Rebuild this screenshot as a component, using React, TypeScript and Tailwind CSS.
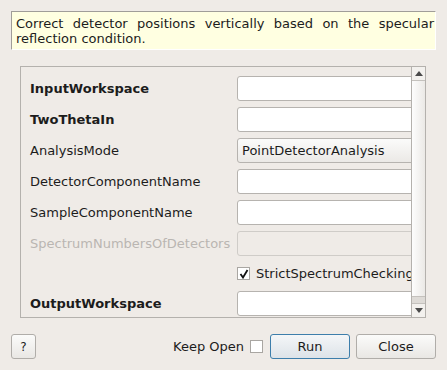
import React from "react";

const rows = [
  { label: "InputWorkspace", bold: true, kind: "input" },
  { label: "TwoThetaIn", bold: true, kind: "input" },
  { label: "AnalysisMode", kind: "combo", value: "PointDetectorAnalysis" },
  { label: "DetectorComponentName", kind: "input" },
  { label: "SampleComponentName", kind: "input" },
  { label: "SpectrumNumbersOfDetectors", kind: "disabled" },
  { label: "", kind: "check", value: "StrictSpectrumChecking" },
  { label: "OutputWorkspace", bold: true, kind: "input" },
];

function Field({ row }: any) {
  if (row.kind === "combo")
    return (
      <div className="w-[200px] h-[25px] shrink-0 rounded-[3px] border border-[#b6b3af] bg-gradient-to-b from-[#fbfbfa] to-[#ebe9e6] pl-[4px] flex items-center">
        {row.value}
      </div>
    );
  if (row.kind === "disabled")
    return <div className="w-[200px] h-[25px] shrink-0 rounded-[3px] border border-[#cfccc8] bg-[#efebe7]" />;
  if (row.kind === "check")
    return (
      <div className="h-[23px] flex items-center gap-[6px] whitespace-nowrap">
        <div className="w-[13px] h-[13px] border border-[#a9a6a2] bg-white flex items-center justify-center">
          <svg width="10" height="10" viewBox="0 0 10 10">
            <path d="M1.5 5 L4 8.5 L8.5 1" fill="none" stroke="#111" strokeWidth="1.8" />
          </svg>
        </div>
        <span>{row.value}</span>
      </div>
    );
  return <div className="w-[200px] h-[25px] shrink-0 rounded-[3px] border border-[#b6b3af] bg-white" />;
}

export default function App() {
  return (
    <div
      className="w-[447px] h-[370px] bg-[#efebe7] text-[13px] text-[#1c1c1c] overflow-hidden flex flex-col"
      style={{ fontFamily: '"DejaVu Sans", sans-serif' }}
    >
      <div className="ml-[11px] mt-[11px] w-[425px] h-[39px] bg-[#ffffe1] border-t border-l border-[#a09d99] border-r border-b border-r-white border-b-white pl-[4px] pr-[1px] pt-[4px] leading-[15px] text-justify">
        Correct detector positions vertically based on the specular reflection condition.
      </div>

      <div className="ml-[20px] mt-[16px] w-[406px] h-[252px] border border-[#b4b1ad] flex">
        <div className="flex-1 overflow-hidden pl-[9px] pt-[9px] flex flex-col gap-[6px]">
          {rows.map((r, i) => (
            <div key={i} className="flex items-center">
              <div
                className={`w-[207px] shrink-0 whitespace-nowrap ${r.bold ? "font-bold" : ""} ${
                  r.kind === "disabled" ? "text-[#bab6b2]" : ""
                }`}
              >
                {r.label}
              </div>
              <Field row={r} />
            </div>
          ))}
        </div>
        <div className="w-[14px] border-l border-[#b4b1ad] flex flex-col">
          <div className="h-[14px] border-b border-[#c4c1bd] flex items-center justify-center bg-[#f3f1ee]">
            <svg width="8" height="5" viewBox="0 0 8 5">
              <path d="M0 5 L4 0 L8 5 Z" fill="#4a4a4a" />
            </svg>
          </div>
          <div className="flex-1 bg-gradient-to-r from-[#fdfdfd] to-[#ebe9e6]" />
          <div className="h-[7px] bg-[#dedbd7] border-t border-[#c4c1bd]" />
          <div className="h-[14px] border-t border-[#c4c1bd] flex items-center justify-center bg-[#f3f1ee]">
            <svg width="8" height="5" viewBox="0 0 8 5">
              <path d="M0 0 L8 0 L4 5 Z" fill="#4a4a4a" />
            </svg>
          </div>
        </div>
      </div>

      <div className="mt-[16px] px-[11px] h-[25px] flex items-center">
        <button className="w-[25px] h-[25px] rounded-[3px] border border-[#b0ada9] bg-gradient-to-b from-[#fbfbfa] to-[#e9e7e4] text-[12px]">
          ?
        </button>
        <div className="flex-1" />
        <span className="mr-[6px]">Keep Open</span>
        <div className="w-[13px] h-[13px] border border-[#a9a6a2] bg-white mr-[7px]" />
        <button className="w-[80px] h-[25px] rounded-[3px] border border-[#3d7eab] bg-gradient-to-b from-[#f4f6f8] to-[#dde3e8]">
          Run
        </button>
        <button className="ml-[6px] w-[80px] h-[25px] rounded-[3px] border border-[#b0ada9] bg-gradient-to-b from-[#fbfbfa] to-[#e9e7e4]">
          Close
        </button>
      </div>
    </div>
  );
}
